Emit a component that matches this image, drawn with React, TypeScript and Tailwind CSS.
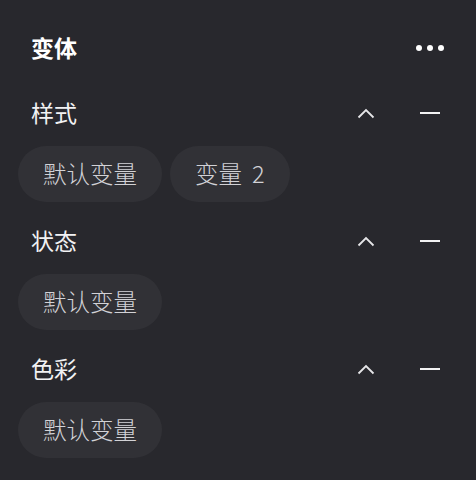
import React from "react";

const font = { fontFamily: '"Noto Sans CJK SC", "Noto Sans", sans-serif' };

function Chevron() {
  return (
    <svg width="18" height="11" viewBox="0 0 18 11" fill="none">
      <path d="M1.5 9.5 L9 2 L16.5 9.5" stroke="#e6e6e8" strokeWidth="1.8" />
    </svg>
  );
}

function Section({ label, chips }: { label: string; chips: React.ReactNode[] }) {
  return (
    <div className="flex flex-col">
      <div className="flex h-[40px] items-center pl-[13px]">
        <span className="text-[23px] text-[#f2f2f3] leading-none -mt-[2px]">{label}</span>
        <div className="ml-auto flex items-center">
          <div className="flex w-[20px] justify-center">
            <Chevron />
          </div>
          <div className="ml-[44px] mr-[18px] h-[2.5px] w-[20px] bg-[#f2f2f3]" />
        </div>
      </div>
      <div className="mt-[13px] flex gap-[8px]">
        {chips.map((c, i) => (
          <div
            key={i}
            className="flex h-[56px] items-center rounded-full bg-[#313136] px-[25px] text-[23.5px] font-light text-[#d2d2d6] leading-none"
          >
            {c}
          </div>
        ))}
      </div>
    </div>
  );
}

export default function App() {
  return (
    <div style={font} className="h-[480px] w-[476px] bg-[#28282d] px-[18px] pt-[28px]">
      <div className="flex h-[40px] items-center pl-[13px]">
        <span className="text-[23px] font-bold text-white leading-none -mt-[2px]">变体</span>
        <div className="ml-auto mr-[14px] flex gap-[5px]">
          <div className="h-[6px] w-[6px] rounded-full bg-white" />
          <div className="h-[6px] w-[6px] rounded-full bg-white" />
          <div className="h-[6px] w-[6px] rounded-full bg-white" />
        </div>
      </div>
      <div className="mt-[25px] flex flex-col gap-[19px]">
        <Section
          label="样式"
          chips={[
            "默认变量",
            <>
              变量<span className="ml-[10px]">2</span>
            </>,
          ]}
        />
        <Section label="状态" chips={["默认变量"]} />
        <Section label="色彩" chips={["默认变量"]} />
      </div>
    </div>
  );
}
